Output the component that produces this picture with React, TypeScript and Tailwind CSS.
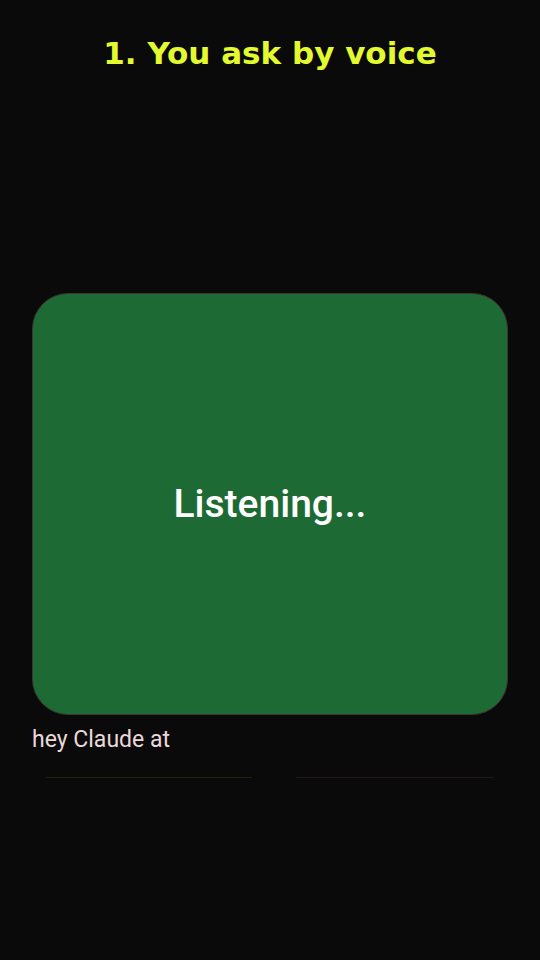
export default function App() {
  return (
    <div className="flex h-[960px] w-[540px] flex-col bg-[#0b0a0a]">
      <h1 className="pt-[34px] text-center font-['DejaVu_Sans',sans-serif] text-[31px] font-bold leading-[38px] text-[#e3fb2e]">
        1. You ask by voice
      </h1>

      <div className="mx-[32px] mt-[221px] flex h-[422px] items-center justify-center rounded-[36px] border border-[#3b3533] bg-[#1e6a35]">
        <span className="font-['Roboto',sans-serif] text-[39px] font-medium text-white">
          Listening...
        </span>
      </div>

      <p className="mt-[11px] px-[32px] font-['Roboto',sans-serif] text-[23px] leading-[28px] text-[#e9d9d9]">
        hey Claude at
      </p>

      <div className="mt-[23px] flex justify-between px-[46px]">
        <div className="h-px w-[206px] bg-[#1c2410]" />
        <div className="h-px w-[198px] bg-[#241818]" />
      </div>
    </div>
  );
}
